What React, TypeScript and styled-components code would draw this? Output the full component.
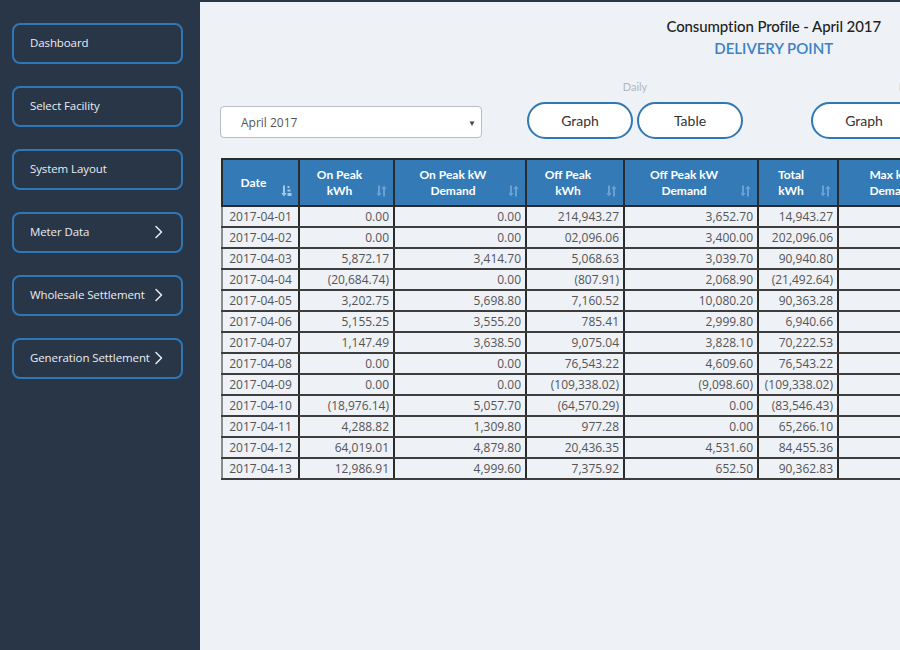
import React from "react";
import styled, { createGlobalStyle } from "styled-components";

const Global = createGlobalStyle`
  html, body { margin: 0; padding: 0; height: 100%; overflow: hidden; }
  body { font-family: "Open Sans", sans-serif; background: #eef1f6; }
  #root { height: 100%; }
`;

const Shell = styled.div`
  display: flex;
  width: 900px;
  height: 650px;
  overflow: hidden;
`;

const Sidebar = styled.nav`
  flex: 0 0 200px;
  background: #293648;
  padding: 23px 0 0 12px;
  box-sizing: border-box;
  display: flex;
  flex-direction: column;
  gap: 22px;
`;

const NavButton = styled.div`
  width: 171px;
  height: 41px;
  flex: 0 0 41px;
  box-sizing: border-box;
  border: 2px solid #2f77b5;
  border-radius: 8px;
  display: flex;
  align-items: center;
  justify-content: space-between;
  padding: 0 18px 2px 16px;
  color: #e9edf2;
  font-family: "Open Sans", sans-serif;
  font-size: 11.5px;
  white-space: nowrap;
  letter-spacing: -0.1px;
`;

const Main = styled.main`
  flex: 1 1 auto;
  min-width: 0;
  border-top: 2px solid #293648;
  background: #eef1f6;
  display: flex;
  flex-direction: column;
  padding: 14px 19px 0 20px;
  overflow: hidden;
`;

const TitleBlock = styled.div`
  align-self: flex-end;
  text-align: center;
  font-family: Lato, sans-serif;
`;

const Title = styled.div`
  font-size: 15px;
  color: #222;
  font-weight: 500;
  line-height: 20px;
  letter-spacing: -0.1px;
`;

const Subtitle = styled.div`
  font-size: 15px;
  color: #3b82c4;
  font-weight: 600;
  line-height: 20px;
  margin-top: 2px;
`;

const Controls = styled.div`
  display: flex;
  align-items: flex-end;
  margin-top: 22px;
  gap: 45px;
  width: max-content;
`;

const Select = styled.div`
  flex: 0 0 262px;
  width: 262px;
  height: 32px;
  box-sizing: border-box;
  background: #fff;
  border: 1px solid #b9bcc0;
  border-radius: 4px;
  display: flex;
  align-items: center;
  justify-content: space-between;
  padding: 0 5px 0 20px;
  margin-bottom: 1px;
  font-family: "Open Sans", sans-serif;
  font-size: 12px;
  color: #555;
`;

const Caret = styled.span`
  font-size: 8px;
  color: #444;
`;

const Group = styled.div<{ $gapLeft?: number }>`
  display: flex;
  flex-direction: column;
  align-items: center;
  flex: 0 0 auto;
  margin-left: ${(p) => p.$gapLeft ?? 0}px;
`;

const GroupLabel = styled.div`
  font-family: Lato, sans-serif;
  font-size: 11px;
  color: #b5b8bc;
  height: 15px;
  margin-bottom: 7px;
`;

const Pills = styled.div`
  display: flex;
  gap: 4px;
`;

const Pill = styled.div`
  width: 106px;
  height: 37px;
  box-sizing: border-box;
  border: 2px solid #2f77b5;
  border-radius: 19px;
  background: #fff;
  display: flex;
  align-items: center;
  justify-content: center;
  font-family: Lato, sans-serif;
  font-size: 14px;
  color: #333;
`;

const TableWrap = styled.div`
  margin-top: 19px;
  margin-left: 1px;
  width: max-content;
`;

const Table = styled.table<{ $w: number }>`
  border-collapse: collapse;
  table-layout: fixed;
  width: ${(p) => p.$w}px;
  font-family: "Open Sans", sans-serif;
`;

const Th = styled.th<{ $w: number }>`
  width: ${(p) => p.$w}px;
  height: 47px;
  box-sizing: border-box;
  background: #337ab7;
  color: #fff;
  font-family: Lato, sans-serif;
  font-weight: 700;
  font-size: 12px;
  line-height: 16px;
  border: 2px solid #2b2b2b;
  padding: 0 16px 0 2px;
  position: relative;
  text-align: center;
`;

const SortIcon = styled.svg`
  position: absolute;
  right: 6px;
  bottom: 8px;
`;

const Td = styled.td<{ $center?: boolean }>`
  height: 21px;
  box-sizing: border-box;
  border-left: 2px solid #2b2b2b;
  border-right: 2px solid #2b2b2b;
  border-bottom: 2px solid #3d3d3d;
  padding: 0 4px 0 4px;
  font-size: 12px;
  color: #555;
  text-align: ${(p) => (p.$center ? "center" : "right")};
  white-space: nowrap;
  overflow: hidden;
  line-height: 18px;
`;

const FirstTd = styled(Td)`
  border-left-color: #8a8a8a;
`;

const Chevron = () => (
  <svg width="9" height="14" viewBox="0 0 9 14">
    <path d="M2 1.5 L7.5 7 L2 12.5" fill="none" stroke="#e9edf2" strokeWidth="1.5" strokeLinecap="round" strokeLinejoin="round" />
  </svg>
);

const Sort = ({ active }: { active?: boolean }) =>
  active ? (
    <SortIcon width="11" height="12" viewBox="0 0 11 12">
      <path d="M3 0.5 V10" stroke="#a8c8e6" strokeWidth="2" />
      <path d="M0.3 8 L3 11.5 L5.7 8 Z" fill="#a8c8e6" />
      <rect x="6.5" y="1" width="2" height="2" fill="#a8c8e6" />
      <rect x="6.5" y="4.5" width="3" height="2" fill="#a8c8e6" />
      <rect x="6.5" y="8" width="4" height="3" fill="#a8c8e6" />
    </SortIcon>
  ) : (
    <SortIcon width="11" height="12" viewBox="0 0 11 12">
      <path d="M3 0.5 V10" stroke="#6aa0d2" strokeWidth="2" />
      <path d="M0.3 8 L3 11.5 L5.7 8 Z" fill="#6aa0d2" />
      <path d="M8 11.5 V2" stroke="#6aa0d2" strokeWidth="2" />
      <path d="M5.3 4 L8 0.5 L10.7 4 Z" fill="#6aa0d2" />
    </SortIcon>
  );

const columns: { label: React.ReactNode; w: number; active?: boolean }[] = [
  { label: "Date", w: 77, active: true },
  { label: <>On Peak<br />kWh</>, w: 95 },
  { label: <>On Peak kW<br />Demand</>, w: 132 },
  { label: <>Off Peak<br />kWh</>, w: 98 },
  { label: <>Off Peak kW<br />Demand</>, w: 134 },
  { label: <>Total<br />kWh</>, w: 80 },
  { label: <>Max kW<br />Demand</>, w: 122 },
];

const tableWidth = columns.reduce((s, c) => s + c.w, 0);

const rows: string[][] = [
  ["2017-04-01", "0.00", "0.00", "214,943.27", "3,652.70", "14,943.27", "3,652.70"],
  ["2017-04-02", "0.00", "0.00", "02,096.06", "3,400.00", "202,096.06", "3,400.00"],
  ["2017-04-03", "5,872.17", "3,414.70", "5,068.63", "3,039.70", "90,940.80", "3,414.70"],
  ["2017-04-04", "(20,684.74)", "0.00", "(807.91)", "2,068.90", "(21,492.64)", "2,068.90"],
  ["2017-04-05", "3,202.75", "5,698.80", "7,160.52", "10,080.20", "90,363.28", "10,080.20"],
  ["2017-04-06", "5,155.25", "3,555.20", "785.41", "2,999.80", "6,940.66", "3,555.20"],
  ["2017-04-07", "1,147.49", "3,638.50", "9,075.04", "3,828.10", "70,222.53", "3,828.10"],
  ["2017-04-08", "0.00", "0.00", "76,543.22", "4,609.60", "76,543.22", "4,609.60"],
  ["2017-04-09", "0.00", "0.00", "(109,338.02)", "(9,098.60)", "(109,338.02)", "(9,098.60)"],
  ["2017-04-10", "(18,976.14)", "5,057.70", "(64,570.29)", "0.00", "(83,546.43)", "5,057.70"],
  ["2017-04-11", "4,288.82", "1,309.80", "977.28", "0.00", "65,266.10", "1,309.80"],
  ["2017-04-12", "64,019.01", "4,879.80", "20,436.35", "4,531.60", "84,455.36", "4,879.80"],
  ["2017-04-13", "12,986.91", "4,999.60", "7,375.92", "652.50", "90,362.83", "4,999.60"],
];

const navItems = [
  { label: "Dashboard" },
  { label: "Select Facility" },
  { label: "System Layout" },
  { label: "Meter Data", sub: true },
  { label: "Wholesale Settlement", sub: true },
  { label: "Generation Settlement", sub: true },
];

export default function App() {
  return (
    <>
      <Global />
      <Shell>
        <Sidebar>
          {navItems.map((n) => (
            <NavButton key={n.label}>
              <span>{n.label}</span>
              {n.sub && <Chevron />}
            </NavButton>
          ))}
        </Sidebar>
        <Main>
          <TitleBlock>
            <Title>Consumption Profile - April 2017</Title>
            <Subtitle>DELIVERY POINT</Subtitle>
          </TitleBlock>
          <Controls>
            <Select>
              <span>April 2017</span>
              <Caret>▼</Caret>
            </Select>
            <Group>
              <GroupLabel>Daily</GroupLabel>
              <Pills>
                <Pill>Graph</Pill>
                <Pill>Table</Pill>
              </Pills>
            </Group>
            <Group $gapLeft={23}>
              <GroupLabel>Monthly</GroupLabel>
              <Pills>
                <Pill>Graph</Pill>
                <Pill>Table</Pill>
              </Pills>
            </Group>
          </Controls>
          <TableWrap>
            <Table $w={tableWidth}>
              <thead>
                <tr>
                  {columns.map((c, i) => (
                    <Th key={i} $w={c.w}>
                      {c.label}
                      <Sort active={c.active} />
                    </Th>
                  ))}
                </tr>
              </thead>
              <tbody>
                {rows.map((r) => (
                  <tr key={r[0]}>
                    {r.map((v, i) =>
                      i === 0 ? (
                        <FirstTd key={i} $center>{v}</FirstTd>
                      ) : (
                        <Td key={i}>{v}</Td>
                      )
                    )}
                  </tr>
                ))}
              </tbody>
            </Table>
          </TableWrap>
        </Main>
      </Shell>
    </>
  );
}
